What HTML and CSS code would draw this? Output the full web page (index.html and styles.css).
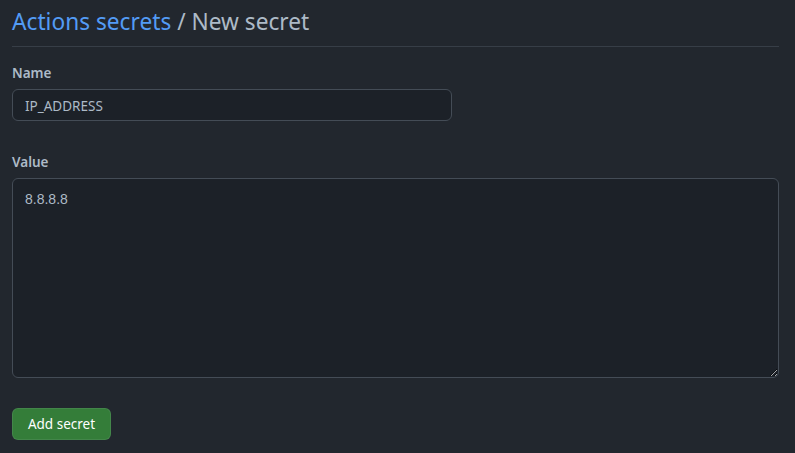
FILE: index.html
```html
<!DOCTYPE html>
<html>
<head>
<meta charset="utf-8">
<link rel="stylesheet" href="styles.css">
</head>
<body>
<div class="page">
  <div class="subhead">
    <h2 class="subhead-title"><a href="#" class="crumb">Actions secrets</a> / New secret</h2>
  </div>
  <form class="form">
    <div class="field">
      <label class="label" for="name">Name</label>
      <input id="name" class="input" type="text" value="IP_ADDRESS">
    </div>
    <div class="field field-value">
      <label class="label" for="value">Value</label>
      <textarea id="value" class="textarea">8.8.8.8</textarea>
    </div>
    <div class="actions">
      <button type="button" class="btn-primary">Add secret</button>
    </div>
  </form>
</div>
</body>
</html>
```
FILE: styles.css
```css
html, body {
  margin: 0;
  padding: 0;
  background: #22272e;
  color: #adbac7;
  font-family: "Noto Sans", "Open Sans", sans-serif;
  font-size: 14px;
}
.page {
  padding: 0 16px 0 12px;
}
.subhead {
  border-bottom: 1px solid #373e47;
  padding: 4px 0 6px;
}
.subhead-title {
  margin: 0;
  font-size: 22.7px;
  font-weight: 400;
  line-height: 36px;
  color: #adbac7;
}
.crumb {
  color: #539bf5;
  text-decoration: none;
}
.form {
  display: flex;
  flex-direction: column;
}
.field {
  display: flex;
  flex-direction: column;
  align-items: flex-start;
}
.field:first-child {
  margin-top: 16px;
}
.field-value {
  margin-top: 31px;
}
.label {
  font-weight: 600;
  font-size: 13.5px;
  line-height: 21px;
  margin-bottom: 5px;
}
.input, .textarea {
  box-sizing: border-box;
  background: #1c2128;
  border: 1px solid #444c56;
  border-radius: 6px;
  color: #adbac7;
  font-family: "Noto Sans", "Open Sans", sans-serif;
  font-size: 13.5px;
  outline: none;
}
.input {
  width: 440px;
  height: 32px;
  padding: 6px 12px 4px;
}
.textarea {
  width: 100%;
  height: 200px;
  padding: 10px 12px;
  font-family: "Liberation Sans", Arial, sans-serif;
  font-size: 14px;
  line-height: 20px;
  resize: vertical;
}
.actions {
  margin-top: 30px;
}
.btn-primary {
  height: 32px;
  width: 99px;
  background: #347d39;
  color: #ffffff;
  border: 1px solid rgba(205, 217, 229, 0.1);
  border-radius: 6px;
  font-family: "Noto Sans", "Open Sans", sans-serif;
  font-size: 13.5px;
  font-weight: 400;
  padding: 0;
  white-space: nowrap;
}
```
